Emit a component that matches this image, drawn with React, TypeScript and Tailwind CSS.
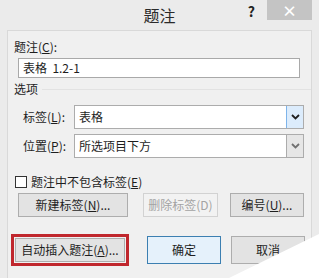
import { ReactNode } from "react";

const Chevron = ({ color }: { color: string }) => (
  <svg width="9" height="6" viewBox="0 0 9 6">
    <path d="M1 1 L4.5 4.5 L8 1" fill="none" stroke={color} strokeWidth="1.8" />
  </svg>
);

interface SelectRowProps {
  label: ReactNode;
  value: string;
  active?: boolean;
}

const SelectRow = ({ label, value, active }: SelectRowProps) => (
  <div className="flex items-center">
    <span className="w-[66px] pl-[15px] whitespace-nowrap">{label}</span>
    <div className="flex h-[24px] w-[230px] border border-[#acacac] bg-white">
      <span className="flex-1 pl-[4px] leading-[22px]">{value}</span>
      <div
        className={
          active
            ? "flex w-[17px] items-center justify-center border-l border-[#7eb4ea] bg-[#dcecfc]"
            : "flex w-[17px] items-center justify-center border-l border-[#acacac] bg-[#e6e6e6]"
        }
      >
        <Chevron color={active ? "#202020" : "#707070"} />
      </div>
    </div>
  </div>
);

const Btn = ({ children, className }: { children: ReactNode; className: string }) => (
  <div className={`flex items-center justify-center border whitespace-nowrap ${className}`}>
    {children}
  </div>
);

export default function App() {
  return (
    <div className="relative flex h-[278px] w-[319px] flex-col overflow-hidden bg-[#ebebeb] font-['Noto_Sans_CJK_SC',sans-serif] text-[12px] text-[#1e1e1e]">
      <div className="grid h-[30px] shrink-0 grid-cols-[1fr_auto_1fr]">
        <div />
        <span className="pt-[5px] text-[16px] leading-[20px] text-[#2a2a2a]">题注</span>
        <div className="flex justify-end pr-[7px]">
          <span className="pt-[1px] pr-[12px] text-[14px] font-bold leading-[20px] text-[#222]">?</span>
          <div className="flex h-[20px] w-[45px] items-center justify-center bg-[#c4c4c4] text-[15px] font-bold leading-none text-white">
            ×
          </div>
        </div>
      </div>

      <div className="mx-[7px] flex flex-1 flex-col border border-b-0 border-[#d9d9d9] bg-[#f0f0f0]">
        <div className="pl-[6px] pt-[8px] leading-[16px]">
          题注(<u>C</u>):
        </div>
        <div className="ml-[10px] mt-[3px] h-[20px] w-[282px] border border-[#a9a9a9] bg-white pl-[4px] leading-[18px]">
          表格&nbsp;&nbsp;1.2-1
        </div>

        <div className="mt-[3px] flex items-center pl-[6px]">
          <span className="leading-[16px]">选项</span>
          <div className="ml-[4px] h-px flex-1 bg-[#e2e2e2]" />
        </div>

        <div className="mt-[8px] flex flex-col gap-[5px]">
          <SelectRow label={<>标签(<u>L</u>):</>} value="表格" active />
          <SelectRow label={<>位置(<u>P</u>):</>} value="所选项目下方" />
        </div>

        <div className="mt-[16px] flex items-center pl-[7px] leading-[16px]">
          <div className="h-[12px] w-[12px] border border-[#333] bg-white" />
          <span className="ml-[4px]">
            题注中不包含标签(<u>E</u>)
          </span>
        </div>

        <div className="mt-[3px] flex pl-[10px]">
          <Btn className="h-[24px] w-[110px] border-[#adadad] bg-[#e3e3e3]">
            新建标签(<u>N</u>)...
          </Btn>
          <Btn className="ml-[15px] h-[24px] w-[75px] border-[#d2d2d2] bg-[#f2f2f2] text-[#a3a3a3]">
            删除标签(D)
          </Btn>
          <Btn className="ml-[12px] h-[24px] w-[74px] border-[#adadad] bg-[#e3e3e3]">
            编号(<u>U</u>)...
          </Btn>
        </div>

        <div className="mt-[17px] flex items-center pl-[3px]">
          <div className="border-[3px] border-[#c0272d] p-px">
            <Btn className="h-[24px] w-[110px] border-[#adadad] bg-[#e3e3e3]">
              自动插入题注(<u>A</u>)...
            </Btn>
          </div>
          <Btn className="ml-[18px] h-[28px] w-[74px] border-[#3c7fb1] bg-[#e5f1fb]">
            确定
          </Btn>
          <Btn className="ml-[10px] h-[28px] w-[74px] border-[#adadad] bg-[#e3e3e3]">
            取消
          </Btn>
        </div>
      </div>

      <svg className="absolute bottom-0 right-0" width="90" height="44" viewBox="0 0 90 44">
        <polygon points="0,44 90,0 90,44" fill="#ffffff" />
      </svg>
    </div>
  );
}
